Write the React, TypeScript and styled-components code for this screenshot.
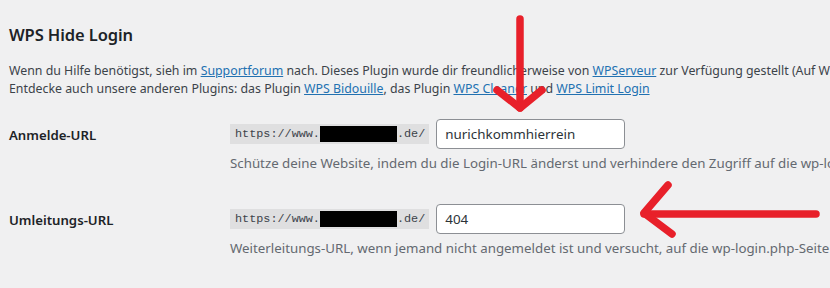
import React from "react";
import styled, { createGlobalStyle } from "styled-components";

const Global = createGlobalStyle`
  html, body { margin: 0; padding: 0; background: #f0f0f1; }
  body { font-family: "Noto Sans", "Open Sans", sans-serif; color: #3c434a; overflow: hidden; }
`;

const Page = styled.div`
  position: relative;
  width: 830px;
  height: 288px;
  padding: 23px 0 0 9px;
  box-sizing: border-box;
  overflow: hidden;
`;

const Title = styled.h2`
  margin: 0;
  font-size: 16.5px;
  line-height: 24px;
  font-weight: 600;
  color: #1d2327;
  letter-spacing: -0.1px;
`;

const Intro = styled.p`
  margin: 15px 0 0;
  font-size: 12.35px;
  line-height: 18px;
  white-space: nowrap;
  color: #3c434a;
`;

const Link = styled.a`
  color: #2271b1;
  text-decoration: underline;
`;

const Row = styled.div<{ $gap: number }>`
  display: flex;
  margin-top: ${(p) => p.$gap}px;
`;

const Label = styled.div`
  width: 221px;
  flex-shrink: 0;
  height: 30px;
  display: flex;
  align-items: center;
  padding-top: 2px;
  box-sizing: border-box;
  font-size: 13.2px;
  font-weight: 600;
  color: #1d2327;
`;

const Field = styled.div`
  display: flex;
  flex-direction: column;
`;

const FieldLine = styled.div`
  display: flex;
  align-items: center;
  gap: 7px;
`;

const Code = styled.code`
  display: flex;
  align-items: center;
  height: 20px;
  padding: 0 4px 0 5px;
  background: rgba(0, 0, 0, 0.07);
  font-family: "Liberation Mono", "DejaVu Sans Mono", monospace;
  font-size: 11.8px;
  color: #3c434a;
  white-space: nowrap;
`;

const Redacted = styled.span`
  display: inline-block;
  width: 77px;
  height: 16px;
  background: #000;
`;

const Input = styled.input`
  width: 189px;
  height: 30px;
  box-sizing: border-box;
  padding: 0 8px;
  border: 1px solid #8c8f94;
  border-radius: 4px;
  background: #fff;
  font-family: "Noto Sans", "Open Sans", sans-serif;
  font-size: 13.4px;
  color: #2c3338;
  outline: none;
`;

const Description = styled.p`
  margin: 4px 0 0;
  font-size: 13.3px;
  line-height: 21px;
  color: #646970;
  white-space: nowrap;
`;

const Arrows = styled.svg`
  position: absolute;
  left: 0;
  top: 0;
  pointer-events: none;
`;

export default function App() {
  return (
    <>
      <Global />
      <Page>
        <Title>WPS Hide Login</Title>
        <Intro>
          Wenn du Hilfe benötigst, sieh im <Link href="#">Supportforum</Link> nach. Dieses Plugin wurde dir
          freundlicherweise von <Link href="#">WPServeur</Link> zur Verfügung gestellt (Auf WPServeur)
          <br />
          Entdecke auch unsere anderen Plugins: das Plugin <Link href="#">WPS Bidouille</Link>, das Plugin{" "}
          <Link href="#">WPS Cleaner</Link> und <Link href="#">WPS Limit Login</Link>
        </Intro>
        <Row $gap={21}>
          <Label>Anmelde-URL</Label>
          <Field>
            <FieldLine>
              <Code>
                https://www.<Redacted />.de/
              </Code>
              <Input defaultValue="nurichkommhierrein" />
            </FieldLine>
            <Description>
              Schütze deine Website, indem du die Login-URL änderst und verhindere den Zugriff auf die wp-login.php-Seite
            </Description>
          </Field>
        </Row>
        <Row $gap={30}>
          <Label>Umleitungs-URL</Label>
          <Field>
            <FieldLine>
              <Code>
                https://www.<Redacted />.de/
              </Code>
              <Input defaultValue="404" />
            </FieldLine>
            <Description>
              Weiterleitungs-URL, wenn jemand nicht angemeldet ist und versucht, auf die wp-login.php-Seite oder
            </Description>
          </Field>
        </Row>
        <Arrows width="830" height="288" viewBox="0 0 830 288">
          <g stroke="#e8202a" strokeWidth="7.5" strokeLinecap="round" strokeLinejoin="round" fill="none">
            <path d="M520 19 L520 108" />
            <path d="M497 90 L520 108 L542 90" />
            <path d="M816 214 L644 214" />
            <path d="M668 185 L644 213 L672 234" />
          </g>
        </Arrows>
      </Page>
    </>
  );
}
